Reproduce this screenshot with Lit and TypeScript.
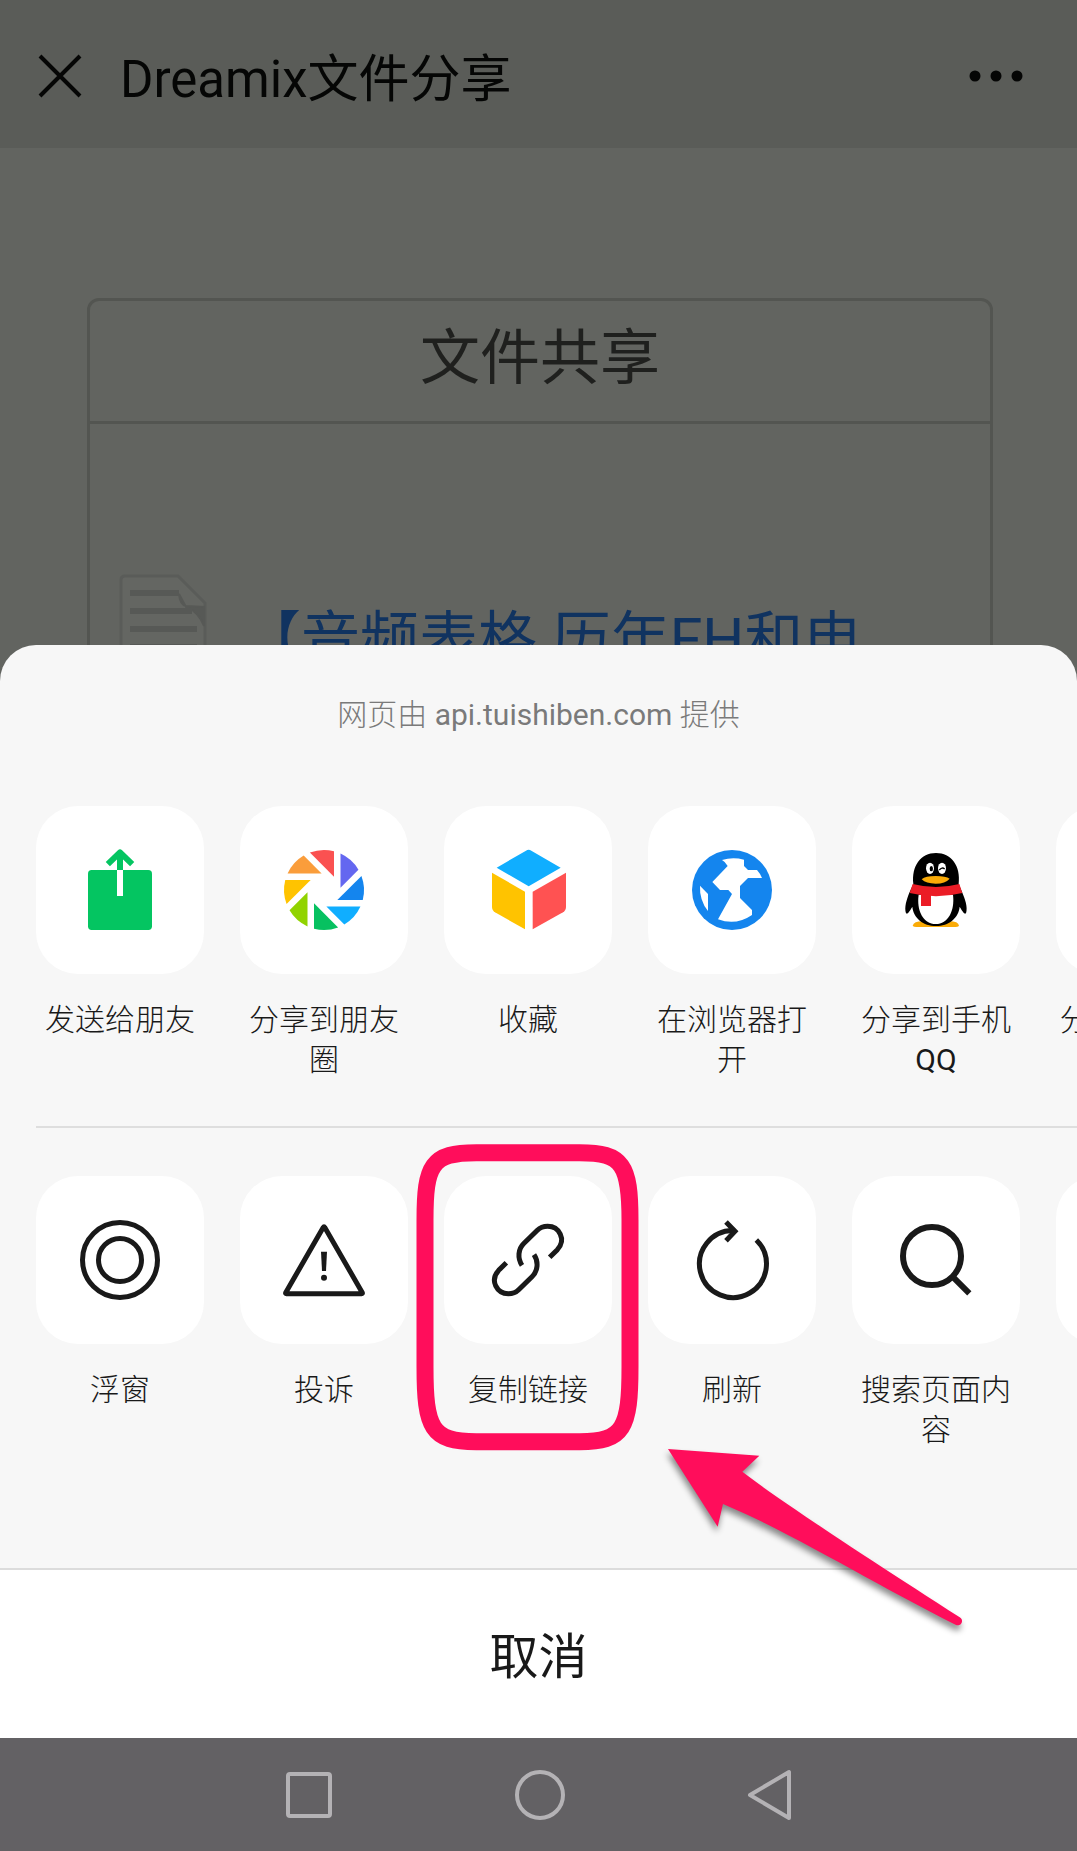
import { LitElement, html, svg, css, nothing, type TemplateResult } from "lit";
import { customElement, property } from "lit/decorators.js";

interface Action {
  label: string | TemplateResult;
  icon: TemplateResult | typeof nothing;
  /** Origin of the icon's 504-unit drawing grid. */
  origin: string;
  marked?: boolean;
}

const BLADES = ["#fa5151", "#6467f0", "#1485ee", "#10aeff", "#07c160", "#91d300", "#ffc300", "#fa9d3b"];

const sendIcon = svg`
  <rect x="264" y="270" width="192" height="180" rx="11" fill="#04c561"/>
  <path d="M360 216V270" stroke="#04c561" stroke-width="18"/>
  <path d="M323.500 252.500 360 217 396.500 252.500" fill="none" stroke="#04c561" stroke-width="18" stroke-linejoin="round"/>
  <path d="M360 270V348" stroke="#fff" stroke-width="18"/>`;

const momentsIcon = svg`
  <g transform="translate(972 330)">
    ${BLADES.map((fill, i) => svg`<path d="M30-40-42.300-112.300A120 120 0 0 1 30-116.200Z" fill=${fill} transform="rotate(${i * 45})"/>`)}
  </g>`;

const favoriteIcon = svg`
  <path d="M230 263 318 212Q326 207 334 212L422 263 326 319Z" fill="#10aeff"/>
  <path d="M216 278 315 335V448L225 397Q216 391 216 380Z" fill="#ffc300"/>
  <path d="M438 278 338 335V448L429 397Q438 391 438 380Z" fill="#ff5252"/>`;

const browserIcon = svg`
  <circle cx="936" cy="330" r="120" fill="#1485ee"/>
  <path d="M906 240Q938 230 972 239V258L984 270H1011Q1021 281 1026 294H984L960 318V354L996 390V405Q948 438 894 418L936 342 925 330H900L877 306 923 258Q916 245 906 240Z" fill="#fff"/>
  <path d="M840 317 864 342V393Q838 361 840 317Z" fill="#fff"/>`;

const qqIcon = svg`
  <path d="M278 437Q281 424 308 424H388Q415 424 417 437 416 441 400 441H296Q279 441 278 437Z" fill="#faab07"/>
  <path d="M280 312C274 258 302 219 348 219S423 258 416 312L427 338C435 358 444 380 438 400 432 404 424 388 419 380 416 414 386 438 348 438S280 414 277 380C272 388 264 404 258 400 252 382 260 358 268 338Z" fill="#000"/>
  <path d="M296 344H399C405 392 384 432 347 432S289 392 296 344Z" fill="#fff"/>
  <path d="M278 312Q348 330 418 312L427 339Q348 358 269 339Z" fill="#eb1c26"/>
  <path d="M303 344H333V378H303Z" fill="#eb1c26"/>
  <ellipse cx="330" cy="265" rx="12" ry="17" fill="#fff"/>
  <ellipse cx="366" cy="265" rx="12" ry="17" fill="#fff"/>
  <ellipse cx="334" cy="266" rx="5" ry="8" fill="#000"/>
  <path d="M358 270Q366 260 374 267" fill="none" stroke="#000" stroke-width="4"/>
  <path d="M305 298Q316 288 347 288T389 296Q376 311 347 311T305 298Z" fill="#faab07"/>`;

const floatIcon = svg`
  <g fill="none" stroke="#191919" stroke-width="15">
    <circle cx="360" cy="450" r="112.500"/>
    <circle cx="360" cy="450" r="64.500"/>
  </g>`;

const reportIcon = svg`
  <path d="M970 352Q972 348 974 352L1087 548Q1088 551 1085 551H859Q856 551 857 548Z" fill="none" stroke="#191919" stroke-width="15" stroke-linejoin="round"/>
  <path d="M963 425H981L978 483H966Z" fill="#191919"/>
  <circle cx="972" cy="503" r="9" fill="#191919"/>`;

const LINK_HALF = "M449 412 472 389C500 358 477 319 443 319 430 319 420 323 412 331L372 370C354 387 352 415 366 436";
const linkIcon = svg`
  <g fill="none" stroke="#191919" stroke-width="15">
    <path d=${LINK_HALF}/>
    <path d=${LINK_HALF} transform="rotate(180 384 420)"/>
  </g>`;

const refreshIcon = svg`
  <g fill="none" stroke="#191919" stroke-width="15">
    <path d="M1069 360A100.500 100.500 0 1 1 1001 331.500"/>
    <path d="M978 306 1005 334 978 362"/>
  </g>`;

const searchIcon = svg`
  <g fill="none" stroke="#191919" stroke-width="18">
    <circle cx="396" cy="408" r="87"/>
    <path d="M457 469 508 520"/>
  </g>`;

const SHARE_ACTIONS: Action[] = [
  { label: "发送给朋友", icon: sendIcon, origin: "108 78" },
  { label: "分享到朋友圈", icon: momentsIcon, origin: "720 78" },
  { label: "收藏", icon: favoriteIcon, origin: "72 78" },
  { label: "在浏览器打开", icon: browserIcon, origin: "684 78" },
  { label: html`分享到手机<span class="latin">QQ</span>`, icon: qqIcon, origin: "96 78" },
  { label: "分享到QQ空间", icon: nothing, origin: "0 0" },
];

const PAGE_ACTIONS: Action[] = [
  { label: "浮窗", icon: floatIcon, origin: "108 198" },
  { label: "投诉", icon: reportIcon, origin: "720 198" },
  { label: "复制链接", icon: linkIcon, origin: "132 168", marked: true },
  { label: "刷新", icon: refreshIcon, origin: "744 168" },
  { label: "搜索页面内容", icon: searchIcon, origin: "156 168" },
  { label: "", icon: nothing, origin: "0 0" },
];

@customElement("action-row")
export class ActionRow extends LitElement {
  static styles = css`
    :host { display: block; }
    .row {
      display: flex;
      gap: 36px;
      margin: 0;
      padding: 0 36px;
      list-style: none;
    }
    .item {
      position: relative;
      flex: none;
      width: 168px;
    }
    .action {
      display: flex;
      flex-direction: column;
      gap: 26px;
      width: 100%;
      min-height: 274px;
      margin: 0;
      padding: 0;
      border: 0;
      background: none;
      color: #191919;
      font: inherit;
      font-weight: 300;
      font-size: 30px;
      line-height: 40px;
      text-align: center;
      cursor: pointer;
    }
    .tile {
      width: 168px;
      height: 168px;
      border-radius: 42px;
      background: #fff;
    }
    .icon { display: block; width: 100%; height: 100%; }
    .label { width: 100%; }
    .latin { font-weight: 400; }
    .frame, .arrow {
      position: absolute;
      z-index: 1;
      pointer-events: none;
    }
    .frame { left: -28px; top: -33px; width: 224px; height: 308px; }
    .arrow {
      left: 216px;
      top: 264px;
      width: 310px;
      height: 200px;
      overflow: visible;
      filter: drop-shadow(-1px 5px 3px rgba(0, 0, 0, 0.45));
    }
  `;

  @property({ attribute: false }) actions: Action[] = [];

  private marks() {
    return html`
      <svg class="frame" viewBox="49 69 672 924" aria-hidden="true">
        <path d="M76 300C76 135 95 98 230 98H540C670 98 691 135 691 300V740C691 925 672 965 540 965H230C95 965 76 925 76 740Z"
          fill="none" stroke="#ff0d5b" stroke-width="51"/>
      </svg>
      <svg class="arrow" viewBox="60 60 930 600" aria-hidden="true">
        <path d="M84 87 358 107 307 155C430 250 700 425 958 591A13 13 0 0 1 948 615C700 490 450 336 249 252L233 320Z" fill="#ff0d5b"/>
      </svg>`;
  }

  render() {
    return html`
      <ul class="row">
        ${this.actions.map(
          (a) => html`
            <li class="item">
              <button class="action" type="button">
                <span class="tile">
                  <svg class="icon" viewBox="${a.origin} 504 504" aria-hidden="true">${a.icon}</svg>
                </span>
                <span class="label">${a.label}</span>
              </button>
              ${a.marked ? this.marks() : nothing}
            </li>`
        )}
      </ul>`;
  }
}

@customElement("app-root")
export class AppRoot extends LitElement {
  static styles = css`
    :host {
      display: flex;
      flex-direction: column;
      min-height: 100vh;
      overflow: hidden;
      background: #626460;
      font-family: Roboto, "Noto Sans CJK SC", sans-serif;
    }
    * { box-sizing: border-box; }
    button {
      margin: 0;
      padding: 0;
      border: 0;
      background: none;
      font: inherit;
      color: inherit;
      cursor: pointer;
    }
    svg { display: block; }
    .stage { flex: 1; display: grid; grid-template-columns: minmax(0, 1fr); }
    .page, .sheet { grid-area: 1 / 1; }
    .bar {
      display: flex;
      align-items: center;
      height: 148px;
      padding: 4px 51px 0 36px;
      background: #5a5c58;
      color: #050605;
    }
    .title {
      flex: 1;
      margin: 0 0 0 36px;
      padding-top: 8px;
      font-size: 51px;
      line-height: 60px;
      font-weight: 400;
    }
    .card {
      margin: 150px 84px 0 87px;
      border: 3px solid #535551;
      border-radius: 12px;
      color: #1f201e;
    }
    .card-title {
      margin: 0;
      padding: 18px 0 22px;
      border-bottom: 3px solid #535551;
      font-size: 60px;
      line-height: 80px;
      font-weight: 400;
      text-align: center;
    }
    .file {
      display: flex;
      align-items: flex-start;
      gap: 34px;
      padding: 150px 28px 0;
    }
    .file-link {
      margin-top: 22px;
      color: #103360;
      font-size: 59px;
      line-height: 88px;
      text-decoration: none;
      white-space: nowrap;
    }
    .sheet {
      align-self: end;
      border-radius: 36px 36px 0 0;
      background: #f7f7f7;
      overflow: hidden;
    }
    .provider {
      margin: 0;
      padding: 48px 0 69px;
      color: #7a7a7a;
      font-size: 30px;
      line-height: 44px;
      font-weight: 300;
      text-align: center;
    }
    .domain { font-weight: 400; }
    .divider {
      margin: 46px 0 48px 36px;
      border: 0;
      border-top: 2px solid #dedede;
    }
    .cancel {
      display: block;
      width: 100%;
      height: 170px;
      margin-top: 118px;
      padding-top: 8px;
      border-top: 2px solid #dcdcdc;
      background: #fff;
      color: #191919;
      font-size: 49px;
      line-height: 60px;
    }
    .nav {
      display: flex;
      justify-content: center;
      align-items: center;
      gap: 180px;
      height: 113px;
      background: #636164;
    }
  `;

  render() {
    return html`
      <div class="stage">
        <div class="page">
          <header class="bar">
            <button type="button" aria-label="关闭">
              <svg width="48" height="48" viewBox="0 0 48 48"><path d="M4 4 44 44M44 4 4 44" stroke="#050605" stroke-width="4"/></svg>
            </button>
            <h1 class="title">Dreamix文件分享</h1>
            <button type="button" aria-label="更多">
              <svg width="60" height="48" viewBox="0 0 60 48" fill="#050605"><circle cx="9" cy="24" r="5.500"/><circle cx="30" cy="24" r="5.500"/><circle cx="51" cy="24" r="5.500"/></svg>
            </button>
          </header>
          <section class="card">
            <h2 class="card-title">文件共享</h2>
            <div class="file">
              <svg width="90" height="104" viewBox="0 0 90 104" aria-hidden="true">
                <path d="M7 2H60L87 29V104H3V6Q3 2 7 2Z" fill="#646662" stroke="#5a5c59" stroke-width="3"/>
                <path d="M61 20Q62 31 68 32L86 33V52Q80 37 68 33Z" fill="#575956" stroke="#575956" stroke-width="2"/>
                <path d="M12 19H61M12 37H74M12 55H79M12 73H79" stroke="#575956" stroke-width="6"/>
              </svg>
              <a class="file-link" href="#">【音频表格 历年FH和电</a>
            </div>
          </section>
        </div>
        <section class="sheet">
          <p class="provider">网页由 <span class="domain">api.tuishiben.com</span> 提供</p>
          <action-row .actions=${SHARE_ACTIONS}></action-row>
          <hr class="divider" />
          <action-row .actions=${PAGE_ACTIONS}></action-row>
          <button class="cancel" type="button">取消</button>
        </section>
      </div>
      <nav class="nav">
        <button type="button" aria-label="最近任务">
          <svg width="50" height="52" viewBox="0 0 50 52"><rect x="4" y="5" width="42" height="42" rx="2" fill="none" stroke="#b4b2b5" stroke-width="4"/></svg>
        </button>
        <button type="button" aria-label="主屏幕">
          <svg width="52" height="52" viewBox="0 0 52 52"><circle cx="26" cy="26" r="23" fill="none" stroke="#b4b2b5" stroke-width="4"/></svg>
        </button>
        <button type="button" aria-label="返回">
          <svg width="48" height="52" viewBox="0 0 48 52"><path d="M43 3V49L4 26Z" fill="none" stroke="#b4b2b5" stroke-width="4" stroke-linejoin="round"/></svg>
        </button>
      </nav>`;
  }
}
